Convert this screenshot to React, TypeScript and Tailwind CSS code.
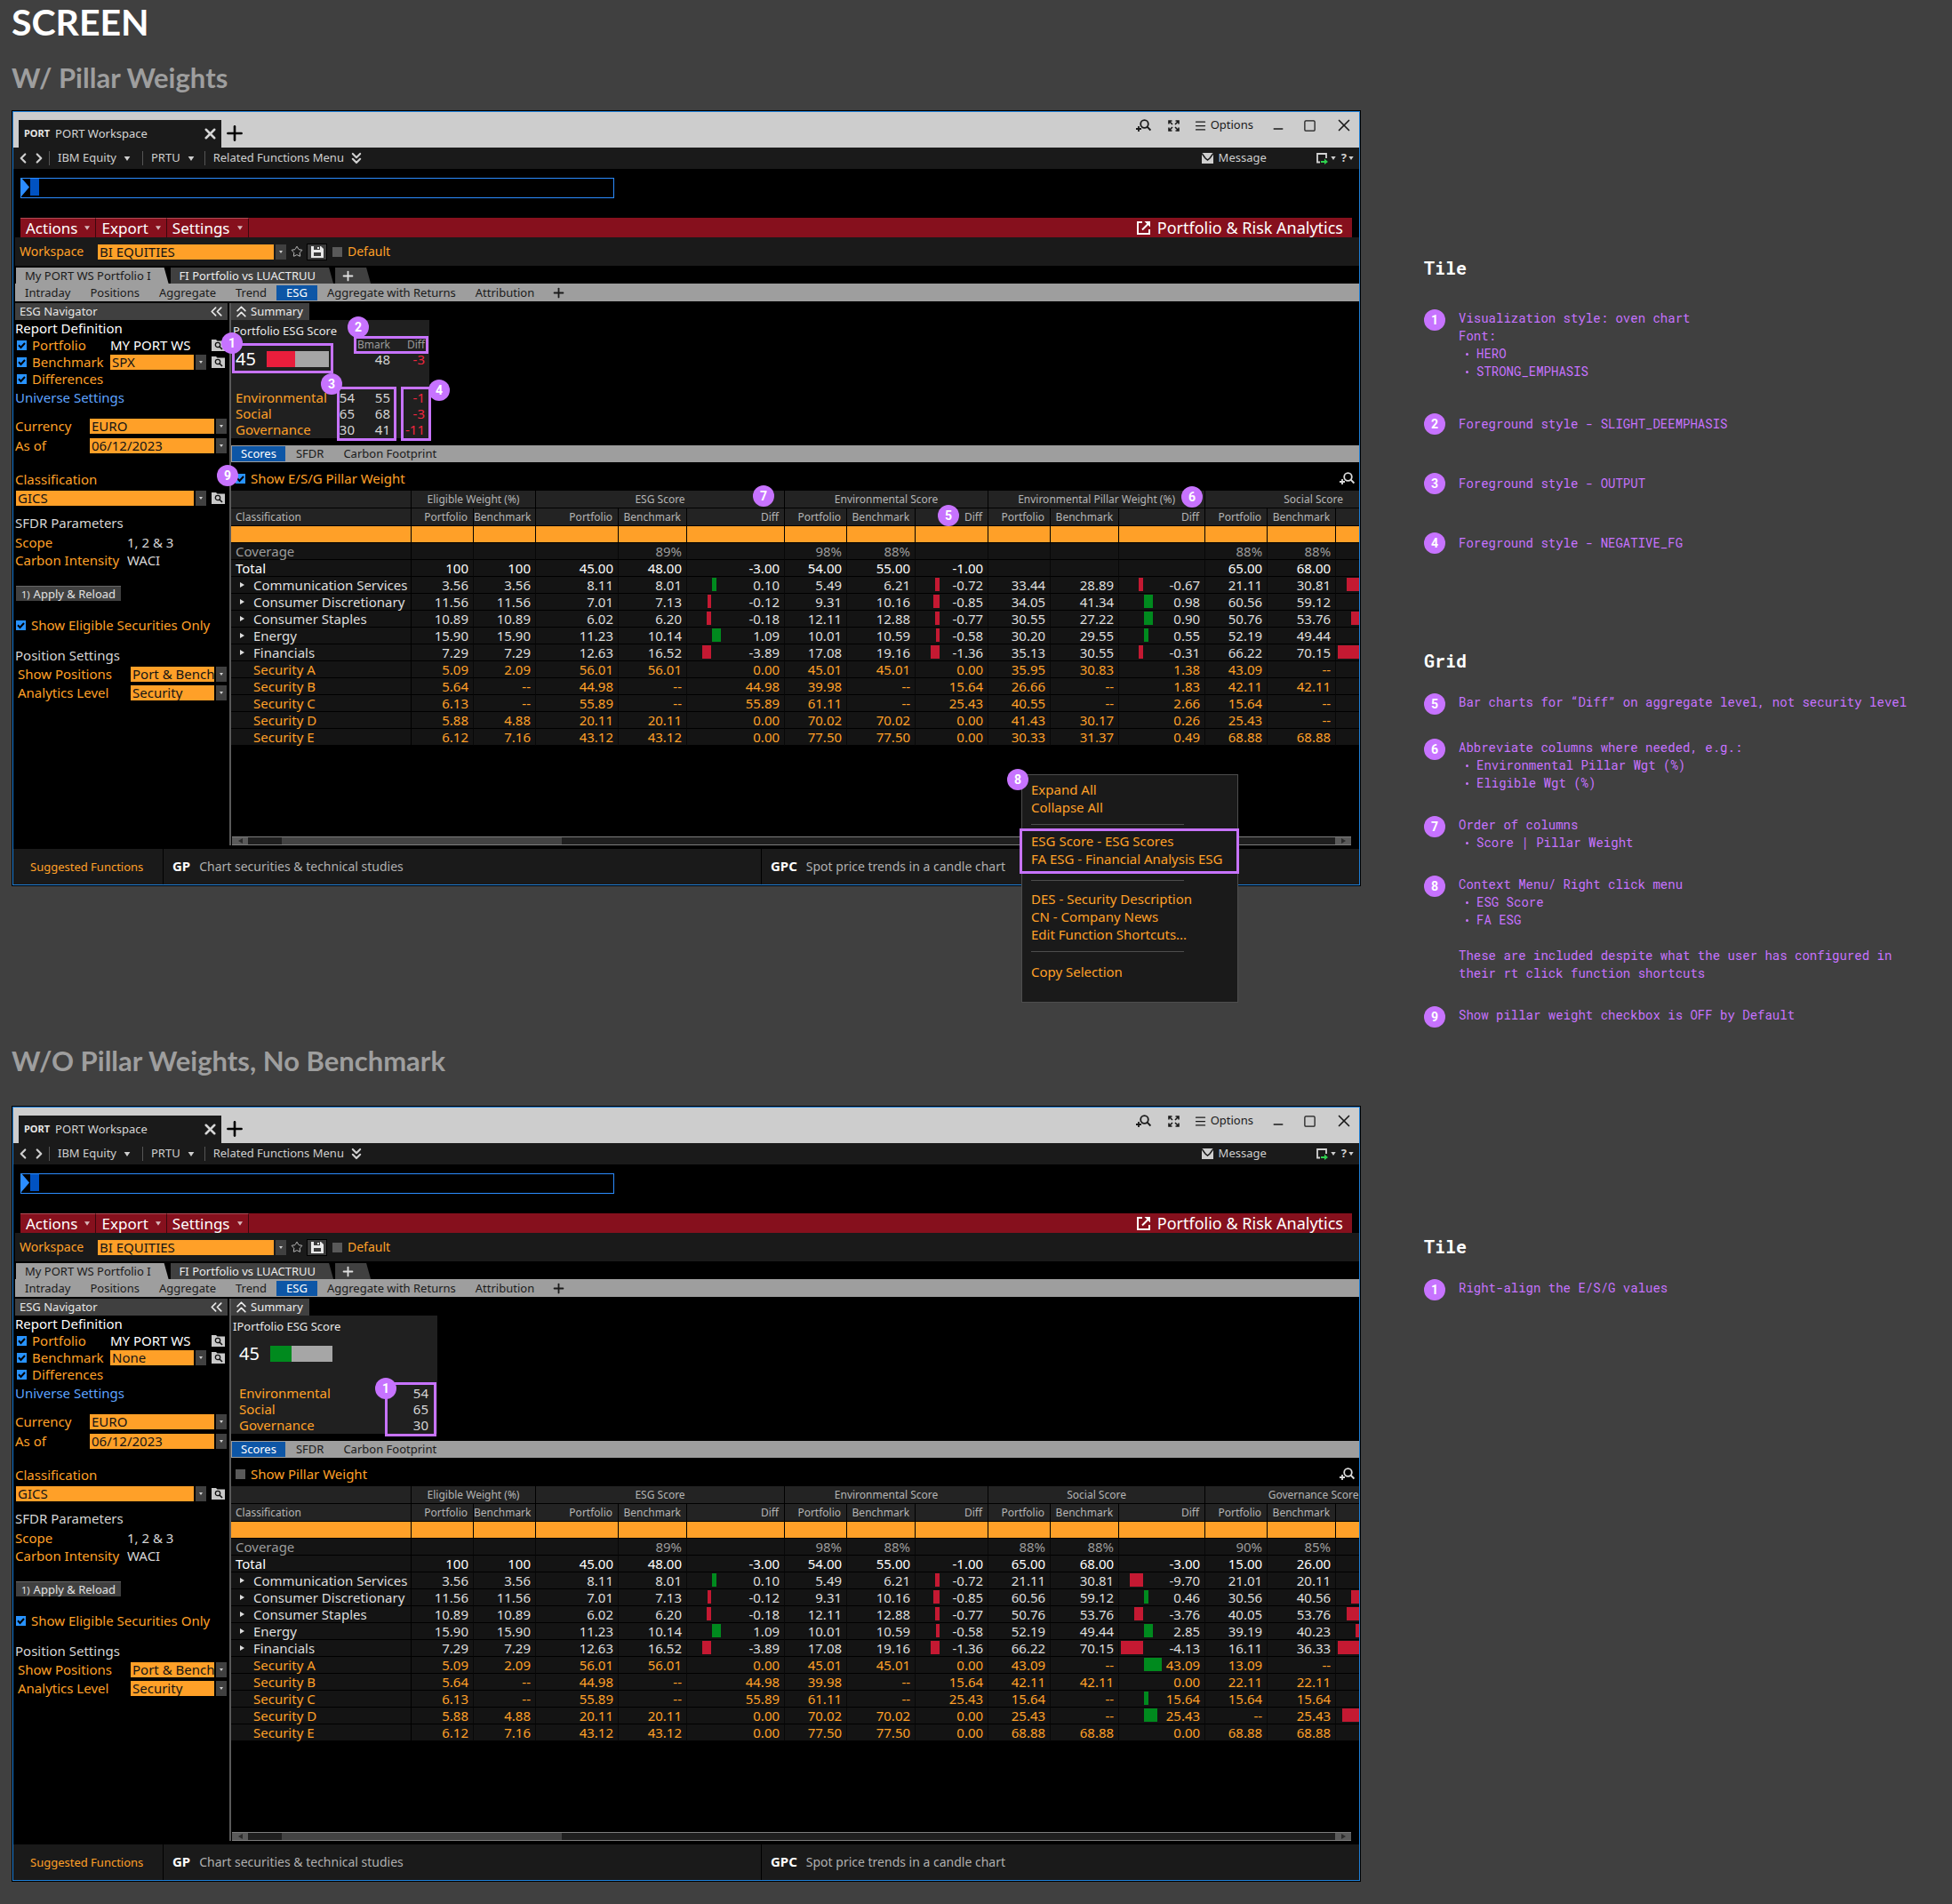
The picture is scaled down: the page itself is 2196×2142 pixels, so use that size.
import type { ReactNode } from 'react';
import { ChevronLeft, ChevronRight, ChevronsDown, ChevronsLeft, ChevronsUp, Menu, Minus, Plus, Square, Star, X } from 'lucide-react';
import clsx from 'clsx';

type Kind = 'coverage' | 'total' | 'group' | 'security';

type Row = {
  name: string;
  kind: Kind;
  cells: string[];
  bars: number[];
};

type Tail = {
  cells: string[];
  bars: number[];
};

// 列幅（分類 + 数値14列）
const COL_WIDTHS = [
  'w-[203px]', 'w-[70px]', 'w-[70px]', 'w-[93px]', 'w-[77px]', 'w-[110px]', 'w-[70px]', 'w-[77px]',
  'w-[82px]', 'w-[70px]', 'w-[77px]', 'w-[97px]', 'w-[70px]', 'w-[77px]', 'w-[97px]',
];

// 差分列のインデックス → bars の位置
const DIFF_COLS = [4, 7, 10, 13];

const BASE_ROWS: Row[] = [
  { name: 'Coverage', kind: 'coverage', cells: ['', '', '', '89%', '', '98%', '88%', ''], bars: [0, 0] },
  { name: 'Total', kind: 'total', cells: ['100', '100', '45.00', '48.00', '-3.00', '54.00', '55.00', '-1.00'], bars: [0, 0] },
  { name: 'Communication Services', kind: 'group', cells: ['3.56', '3.56', '8.11', '8.01', '0.10', '5.49', '6.21', '-0.72'], bars: [5, -5] },
  { name: 'Consumer Discretionary', kind: 'group', cells: ['11.56', '11.56', '7.01', '7.13', '-0.12', '9.31', '10.16', '-0.85'], bars: [-4, -7] },
  { name: 'Consumer Staples', kind: 'group', cells: ['10.89', '10.89', '6.02', '6.20', '-0.18', '12.11', '12.88', '-0.77'], bars: [-5, -5] },
  { name: 'Energy', kind: 'group', cells: ['15.90', '15.90', '11.23', '10.14', '1.09', '10.01', '10.59', '-0.58'], bars: [10, -4] },
  { name: 'Financials', kind: 'group', cells: ['7.29', '7.29', '12.63', '16.52', '-3.89', '17.08', '19.16', '-1.36'], bars: [-10, -10] },
  { name: 'Security A', kind: 'security', cells: ['5.09', '2.09', '56.01', '56.01', '0.00', '45.01', '45.01', '0.00'], bars: [0, 0] },
  { name: 'Security B', kind: 'security', cells: ['5.64', '--', '44.98', '--', '44.98', '39.98', '--', '15.64'], bars: [0, 0] },
  { name: 'Security C', kind: 'security', cells: ['6.13', '--', '55.89', '--', '55.89', '61.11', '--', '25.43'], bars: [0, 0] },
  { name: 'Security D', kind: 'security', cells: ['5.88', '4.88', '20.11', '20.11', '0.00', '70.02', '70.02', '0.00'], bars: [0, 0] },
  { name: 'Security E', kind: 'security', cells: ['6.12', '7.16', '43.12', '43.12', '0.00', '77.50', '77.50', '0.00'], bars: [0, 0] },
];

const PILLAR_TAIL: Tail[] = [
  { cells: ['', '', '', '88%', '88%', ''], bars: [0, 0] },
  { cells: ['', '', '', '65.00', '68.00', ''], bars: [0, 0] },
  { cells: ['33.44', '28.89', '-0.67', '21.11', '30.81', ''], bars: [-5, -15] },
  { cells: ['34.05', '41.34', '0.98', '60.56', '59.12', ''], bars: [10, 0] },
  { cells: ['30.55', '27.22', '0.90', '50.76', '53.76', ''], bars: [10, -10] },
  { cells: ['30.20', '29.55', '0.55', '52.19', '49.44', ''], bars: [5, 0] },
  { cells: ['35.13', '30.55', '-0.31', '66.22', '70.15', ''], bars: [-5, -25] },
  { cells: ['35.95', '30.83', '1.38', '43.09', '--', ''], bars: [0, 0] },
  { cells: ['26.66', '--', '1.83', '42.11', '42.11', ''], bars: [0, 0] },
  { cells: ['40.55', '--', '2.66', '15.64', '--', ''], bars: [0, 0] },
  { cells: ['41.43', '30.17', '0.26', '25.43', '--', ''], bars: [0, 0] },
  { cells: ['30.33', '31.37', '0.49', '68.88', '68.88', ''], bars: [0, 0] },
];

const SOCIAL_TAIL: Tail[] = [
  { cells: ['88%', '88%', '', '90%', '85%', ''], bars: [0, 0] },
  { cells: ['65.00', '68.00', '-3.00', '15.00', '26.00', ''], bars: [0, 0] },
  { cells: ['21.11', '30.81', '-9.70', '21.01', '20.11', ''], bars: [-15, 0] },
  { cells: ['60.56', '59.12', '0.46', '30.56', '40.56', ''], bars: [5, -10] },
  { cells: ['50.76', '53.76', '-3.76', '40.05', '53.76', ''], bars: [-10, -15] },
  { cells: ['52.19', '49.44', '2.85', '39.19', '40.23', ''], bars: [10, -5] },
  { cells: ['66.22', '70.15', '-4.13', '16.11', '36.33', ''], bars: [-25, -25] },
  { cells: ['43.09', '--', '43.09', '13.09', '--', ''], bars: [20, 0] },
  { cells: ['42.11', '42.11', '0.00', '22.11', '22.11', ''], bars: [0, 0] },
  { cells: ['15.64', '--', '15.64', '15.64', '15.64', ''], bars: [5, 0] },
  { cells: ['25.43', '--', '25.43', '--', '25.43', ''], bars: [15, -20] },
  { cells: ['68.88', '68.88', '0.00', '68.88', '68.88', ''], bars: [0, 0] },
];

const KIND_COLORS: Record<Kind, string> = {
  coverage: 'text-[#9b9b9b]',
  total: 'text-white',
  group: 'text-[#dedede]',
  security: 'text-[#ffa028]',
};

/* ---------- アイコン ---------- */

function CaretDown({ className }: { className?: string }) {
  return (
    <svg viewBox="0 0 8 6" className={clsx('shrink-0 fill-current', className)}>
      <path d="M0 0h8L4 6z" />
    </svg>
  );
}

function SearchPlusIcon({ className }: { className?: string }) {
  return (
    <svg viewBox="0 0 17 15" className={className} fill="none" stroke="currentColor">
      <circle cx="9.5" cy="5.5" r="4.3" strokeWidth="1.8" />
      <path d="M12.6 8.6l3.8 4" strokeWidth="2" />
      <path d="M0 11h6M3 8v6" strokeWidth="1.8" />
    </svg>
  );
}

function ExpandIcon() {
  return (
    <svg viewBox="0 0 13 13" className="h-[13px] w-[13px]">
      <path
        d="M1 4.500V1h3.500M1 1l4 4M8.500 1H12v3.500M12 1L8 5M1 8.500V12h3.500M1 12l4-4M12 8.500V12H8.500M12 12L8 8"
        fill="none"
        stroke="currentColor"
        strokeWidth="1.600"
      />
    </svg>
  );
}

function MailIcon() {
  return (
    <svg viewBox="0 0 13 12" className="h-3 w-[13px]">
      <path d="M0 0h13v12H0z" fill="#cfcfcf" />
      <path d="M0 0.500l4 5.500 2.500 2L9 6l4-5.500" fill="none" stroke="#1a1a1a" strokeWidth="1.600" />
    </svg>
  );
}

function PanelArrowIcon() {
  return (
    <svg viewBox="0 0 13 13" className="h-[13px] w-[13px]" fill="none">
      <path d="M4 10.500H1V1h10v5" stroke="#d4d4d4" strokeWidth="1.800" />
      <path d="M5 9h4V6.500l4 3.500-4 3v-2H5z" fill="#2fd04e" />
    </svg>
  );
}

function PopOutIcon() {
  return (
    <svg viewBox="0 0 15 15" className="h-[15px] w-[15px]" fill="none" stroke="#fff" strokeWidth="2">
      <path d="M6 1H1v13h13V9" />
      <path d="M6 9.500l7-7" />
      <path d="M8.500 0H15v6.500z" fill="#fff" stroke="none" />
    </svg>
  );
}

function SaveIcon() {
  return (
    <svg viewBox="0 0 14 13" className="h-[13px] w-[14px]">
      <path d="M0 0h11l3 3v10H0z" fill="#e8e8e8" />
      <path d="M3 0h7v4H3z" fill="#3c3c3c" />
      <path d="M7 1h2v2H7z" fill="#e8e8e8" />
      <path d="M3 7h8v4H3z" fill="#3c3c3c" />
    </svg>
  );
}

function LookupIcon() {
  return (
    <svg viewBox="0 0 15 13" className="h-[13px] w-[15px]">
      <path d="M0 0h5l1.500 1.500H15V13H0z" fill="#c9c9c9" />
      <circle cx="7" cy="6" r="2.700" fill="none" stroke="#111" strokeWidth="1.300" />
      <path d="M9 8l3 3" stroke="#111" strokeWidth="1.600" />
    </svg>
  );
}

/* ---------- 共通パーツ ---------- */

function Badge({ n, className }: { n: number; className?: string }) {
  return (
    <span
      className={clsx(
        "flex h-6 w-6 shrink-0 items-center justify-center rounded-full bg-[#c773ff] font-['Roboto',sans-serif] text-sm font-bold text-white",
        className
      )}
    >
      {n}
    </span>
  );
}

function Outline({ className }: { className: string }) {
  return <span className={clsx('pointer-events-none absolute border-3 border-[#c773ff]', className)} />;
}

function Check({ label, checked, className }: { label: string; checked?: boolean; className?: string }) {
  return (
    <label className={clsx('flex items-center gap-1.5 whitespace-nowrap text-[#ffa028]', className)}>
      <span className="grid shrink-0">
        <input
          type="checkbox"
          defaultChecked={checked}
          className="col-start-1 row-start-1 h-[11px] w-[11px] appearance-none bg-[#595959] checked:bg-[#2893ff]"
        />
        {checked && (
          <svg viewBox="0 0 11 11" className="pointer-events-none col-start-1 row-start-1 h-[11px] w-[11px]" fill="none" stroke="#000" strokeWidth="2">
            <path d="M2 5.300l2.500 2.700L9 3" />
          </svg>
        )}
      </span>
      {label}
    </label>
  );
}

function Dropdown({ id, label, value, className }: { id: string; label?: string; value: string; className?: string }) {
  return (
    <span className={clsx('flex h-[17px] gap-0.5', className)}>
      <select
        id={id}
        aria-label={label}
        className="h-full min-w-0 flex-1 appearance-none overflow-hidden bg-[#ffa028] pl-0.5 text-[15px] leading-[17px] text-[#141414]"
      >
        <option>{value}</option>
      </select>
      <span className="flex w-3 items-center justify-center bg-[#404040] text-[#d0d0d0]">
        <CaretDown className="h-[3px] w-1" />
      </span>
    </span>
  );
}

/* ---------- ウィンドウ上部 ---------- */

function TitleBar() {
  return (
    <div className="flex h-10 bg-[#cdcdcd] px-1.5 text-[13px] text-[#1a1a1a]">
      <div className="flex h-[31px] w-[228px] items-center self-end bg-[#1a1a1a] pl-1.5 pr-[3px] text-[#d6d6d6]">
        <span className="text-[11px] font-bold text-[#e6e6e6]">PORT</span>
        <span className="ml-1.5 flex-1">PORT Workspace</span>
        <button type="button" aria-label="Close tab">
          <X size={19} strokeWidth={3.2} />
        </button>
      </div>
      <button type="button" aria-label="New tab" className="ml-0.5 mt-2 self-center text-black">
        <Plus size={26} strokeWidth={2.4} />
      </button>
      <div className="ml-auto flex h-[30px] items-center">
        <button type="button" aria-label="Search">
          <SearchPlusIcon className="h-[15px] w-[17px]" />
        </button>
        <button type="button" aria-label="Expand" className="ml-[19px]">
          <ExpandIcon />
        </button>
        <button type="button" className="ml-4 flex items-center gap-1">
          <Menu size={15} strokeWidth={2} />
          Options
        </button>
        <button type="button" aria-label="Minimize" className="ml-5 pt-2">
          <Minus size={16} strokeWidth={2.5} />
        </button>
        <button type="button" aria-label="Maximize" className="ml-5">
          <Square size={15} strokeWidth={2} />
        </button>
        <button type="button" aria-label="Close" className="ml-5">
          <X size={22} strokeWidth={1.8} />
        </button>
      </div>
    </div>
  );
}

function NavBar() {
  return (
    <div className="flex h-6 items-center bg-[#1a1a1a] pl-0.5 pr-1.5 text-[13px] text-[#cfcfcf]">
      <button type="button" aria-label="Back">
        <ChevronLeft size={18} strokeWidth={3} />
      </button>
      <button type="button" aria-label="Forward">
        <ChevronRight size={18} strokeWidth={3} />
      </button>
      <span className="ml-0.5 h-4 w-px bg-[#555]" />
      <button type="button" className="flex items-center gap-2 px-[9px]">
        IBM Equity
        <CaretDown className="h-[5px] w-2" />
      </button>
      <span className="ml-1 h-4 w-px bg-[#555]" />
      <button type="button" className="flex items-center gap-2 px-[9px]">
        PRTU
        <CaretDown className="h-[5px] w-2" />
      </button>
      <span className="ml-0.5 h-4 w-px bg-[#555]" />
      <button type="button" className="flex items-center gap-1 px-[9px]">
        Related Functions Menu
        <ChevronsDown size={20} strokeWidth={2.6} />
      </button>
      <button type="button" className="ml-auto flex items-center gap-1.5">
        <MailIcon />
        Message
      </button>
      <button type="button" aria-label="Send to panel" className="ml-14 flex items-center gap-[3px]">
        <PanelArrowIcon />
        <CaretDown className="h-1 w-1.5" />
      </button>
      <button type="button" aria-label="Help" className="ml-1.5 flex items-center gap-0.5 font-bold">
        ?
        <CaretDown className="h-1 w-1.5" />
      </button>
    </div>
  );
}

function CommandLine() {
  return (
    <div className="px-2 pb-[23px] pt-[9px]">
      <div className="relative h-[23px] w-[668px]">
        <input type="text" aria-label="Command line" className="h-full w-full border border-[#2b8cff] bg-black pl-6 text-[15px] text-white" />
        <svg viewBox="0 0 9 21" className="absolute left-px top-px h-[21px] w-[9px] fill-[#2b8cff]">
          <path d="M0 0l9 10.500L0 21z" />
        </svg>
        <span className="absolute left-[11px] top-0.5 h-[19px] w-[10px] bg-[#0052c2]" />
      </div>
    </div>
  );
}

function ActionBar() {
  return (
    <div className="mx-2 flex h-[22px] items-center bg-[#86101d] text-[17px] leading-none text-white">
      {['Actions', 'Export', 'Settings'].map((item) => (
        <button key={item} type="button" className="flex h-full items-center gap-2 border-r border-t border-r-[#3d070d] border-t-[#b04a54] px-1.5">
          {item}
          <CaretDown className="h-[5px] w-1.5 text-[#d9b9bc]" />
        </button>
      ))}
      <a href="#analytics" className="ml-auto flex items-center gap-2 pr-2.5 text-lg leading-none">
        <PopOutIcon />
        Portfolio &amp; Risk Analytics
      </a>
    </div>
  );
}

function WorkspaceBar({ id }: { id: string }) {
  return (
    <div className="ml-0.5 flex h-8 items-center bg-[#1a1a1a] pl-[5px] text-sm text-[#ffa028]">
      <label htmlFor={`${id}-workspace`} className="w-[88px]">
        Workspace
      </label>
      <Dropdown id={`${id}-workspace`} value="BI EQUITIES" className="w-[212px]" />
      <button type="button" aria-label="Favorite" className="ml-[5px] text-[#cfcfcf]">
        <Star size={14} strokeWidth={1.5} />
      </button>
      <button type="button" aria-label="Save" className="ml-1 flex h-[19px] w-[23px] items-center justify-center border border-black bg-[#3c3c3c]">
        <SaveIcon />
      </button>
      <Check label="Default" className="ml-1.5" />
    </div>
  );
}

function WorkspaceTabs() {
  return (
    <div className="ml-0.5 pt-0.5 text-[13px]">
      <div className="flex h-[18px] gap-0.5 pl-px">
        <button type="button" className="bg-[#9e9e9e] pl-2.5 pr-5 leading-[18px] text-[#1a1a1a] [clip-path:polygon(0_0,calc(100%-5px)_0,100%_100%,0_100%)]">
          My PORT WS Portfolio I
        </button>
        <button type="button" className="bg-[#404040] pl-2.5 pr-5 leading-[18px] text-[#ececec] [clip-path:polygon(0_0,calc(100%-5px)_0,100%_100%,0_100%)]">
          FI Portfolio vs LUACTRUU
        </button>
        <button type="button" aria-label="Add workspace tab" className="w-10 bg-[#404040] pl-1.5 text-[#e0e0e0] [clip-path:polygon(0_0,calc(100%-5px)_0,100%_100%,0_100%)]">
          <Plus size={17} strokeWidth={2.5} />
        </button>
      </div>
      <div className="flex h-5 items-center bg-[#9e9e9e] text-[#1a1a1a]">
        {['Intraday', 'Positions', 'Aggregate', 'Trend', 'ESG', 'Aggregate with Returns', 'Attribution'].map((tab) => (
          <button key={tab} type="button" className={clsx('h-[17px] px-[11px] leading-[17px]', tab === 'ESG' && 'bg-[#0d56a6] text-white')}>
            {tab}
          </button>
        ))}
        <button type="button" aria-label="Add view" className="ml-2">
          <Plus size={17} strokeWidth={2.5} />
        </button>
      </div>
    </div>
  );
}

/* ---------- 左ナビ ---------- */

function Navigator({ id, benchmark }: { id: string; benchmark: string }) {
  return (
    <aside className="w-[239px] shrink-0 text-[15px] leading-[19px] text-[#ffa028]">
      <div className="flex h-[19px] items-center justify-between bg-[#404040] pl-[5px] pr-0.5 text-[13px] text-[#e6e6e6]">
        ESG Navigator
        <button type="button" aria-label="Collapse navigator">
          <ChevronsLeft size={21} strokeWidth={2} />
        </button>
      </div>
      <h3 className="text-white">Report Definition</h3>
      <div className="flex h-[19px] items-center pl-0.5 pr-[3px]">
        <Check label="Portfolio" checked className="w-[105px]" />
        <span className="flex-1 text-white">MY PORT WS</span>
        <button type="button" aria-label="Look up portfolio">
          <LookupIcon />
        </button>
      </div>
      <div className="flex h-[19px] items-center pl-0.5 pr-[3px]">
        <Check label="Benchmark" checked className="w-[105px]" />
        <Dropdown id={`${id}-benchmark`} label="Benchmark" value={benchmark} className="w-[108px]" />
        <button type="button" aria-label="Look up benchmark" className="ml-auto">
          <LookupIcon />
        </button>
      </div>
      <Check label="Differences" checked className="h-[19px] pl-0.5" />
      <a href="#universe" className="block h-[22px] leading-[22px] text-[#5ea3ff]">
        Universe Settings
      </a>

      <div className="mt-2.5 flex h-[22px] items-center">
        <label htmlFor={`${id}-currency`} className="w-[84px]">Currency</label>
        <Dropdown id={`${id}-currency`} value="EURO" className="w-[154px]" />
      </div>
      <div className="flex h-[22px] items-center">
        <label htmlFor={`${id}-asof`} className="w-[84px]">As of</label>
        <Dropdown id={`${id}-asof`} value="06/12/2023" className="w-[154px]" />
      </div>

      <label htmlFor={`${id}-class`} className="mt-[18px] block">Classification</label>
      <div className="flex h-[22px] items-center justify-between pl-px pr-[3px]">
        <Dropdown id={`${id}-class`} value="GICS" className="w-[214px]" />
        <button type="button" aria-label="Look up classification">
          <LookupIcon />
        </button>
      </div>

      <h3 className="mt-2 text-[#d6d6d6]">SFDR Parameters</h3>
      <dl className="mt-0.5 grid grid-cols-[126px_1fr] leading-5">
        <dt>Scope</dt>
        <dd className="text-[#d6d6d6]">1, 2 &amp; 3</dd>
        <dt>Carbon Intensity</dt>
        <dd className="text-[#d6d6d6]">WACI</dd>
      </dl>

      <button type="button" className="ml-px mt-[19px] flex h-[17px] items-center gap-1 border-t border-[#666] bg-[#404040] px-1.5 text-[13px] text-[#e0e0e0]">
        <span className="text-[11px]">1)</span>
        Apply &amp; Reload
      </button>

      <Check label="Show Eligible Securities Only" checked className="mt-[18px] h-[19px] pl-px" />

      <h3 className="mt-[15px] text-[#d6d6d6]">Position Settings</h3>
      <div className="mt-px flex h-[21px] items-center pl-[3px]">
        <label htmlFor={`${id}-positions`} className="w-[127px]">Show Positions</label>
        <Dropdown id={`${id}-positions`} value="Port &amp; Bench" className="w-[108px]" />
      </div>
      <div className="flex h-[21px] items-center pl-[3px]">
        <label htmlFor={`${id}-level`} className="w-[127px]">Analytics Level</label>
        <Dropdown id={`${id}-level`} value="Security" className="w-[108px]" />
      </div>
    </aside>
  );
}

/* ---------- タイル ---------- */

function Gauge({ fill, className }: { fill: string; className?: string }) {
  return (
    <span className={clsx('flex items-center gap-3 text-xl text-white', className)}>
      45
      <span className="flex h-[18px] w-[70px] bg-[#a6a6a6]">
        <span className={fill} />
      </span>
    </span>
  );
}

function PillarTile() {
  const scores = [
    ['Environmental', '54', '55', '-1'],
    ['Social', '65', '68', '-3'],
    ['Governance', '30', '41', '-11'],
  ];
  return (
    <div className="relative h-[133px] w-[223px] bg-[#202020] pt-1 text-[15px]">
      <h4 className="h-4 pl-0.5 text-[13px] leading-4 text-[#e8e8e8]">Portfolio ESG Score</h4>
      <div className="grid grid-cols-[1fr_26px_40px_39px] px-[5px] text-right leading-[18px] text-[#d6d6d6]">
        <span className="col-span-3 text-xs leading-[15px] text-[#9b9b9b]">Bmark</span>
        <span className="text-xs leading-[15px] text-[#9b9b9b]">Diff</span>
        <Gauge fill="w-8 bg-[#e91e3c]" className="col-span-2 h-[18px]" />
        <span>48</span>
        <span className="text-[#f0263f]">-3</span>
        <span className="col-span-4 h-[25px]" />
        {scores.map(([name, port, bmark, diff]) => (
          <div key={name} className="contents">
            <span className="text-left text-[#ffa028]">{name}</span>
            <span>{port}</span>
            <span>{bmark}</span>
            <span className="text-[#f0263f]">{diff}</span>
          </div>
        ))}
      </div>
      <Outline className="left-px top-[26px] h-[34px] w-[114px]" />
      <Outline className="left-[138px] top-[18px] h-5 w-[84px]" />
      <Outline className="left-[119px] top-[75px] h-[61px] w-[67px]" />
      <Outline className="left-[191px] top-[75px] h-[61px] w-[34px]" />
      <Badge n={1} className="absolute -left-[11px] top-3.5" />
      <Badge n={2} className="absolute -top-1 left-[131px]" />
      <Badge n={3} className="absolute left-[101px] top-[60px]" />
      <Badge n={4} className="absolute left-[222px] top-[67px]" />
    </div>
  );
}

function SimpleTile() {
  const scores = [
    ['Environmental', '54'],
    ['Social', '65'],
    ['Governance', '30'],
  ];
  return (
    <div className="relative h-[133px] w-[232px] bg-[#202020] pt-1 text-[15px]">
      <h4 className="h-4 pl-0.5 text-[13px] leading-4 text-[#e8e8e8]">IPortfolio ESG Score</h4>
      <div className="grid grid-cols-[1fr_40px] pl-[9px] pr-2.5 pt-3.5 text-right leading-[18px] text-[#d6d6d6]">
        <Gauge fill="w-6 bg-[#008a1e]" className="col-span-2 mb-[26px] h-[18px]" />
        {scores.map(([name, value]) => (
          <div key={name} className="contents">
            <span className="text-left text-[#ffa028]">{name}</span>
            <span>{value}</span>
          </div>
        ))}
      </div>
      <Outline className="left-[173px] top-[75px] h-[61px] w-[58px]" />
      <Badge n={1} className="absolute left-[162px] top-[70px]" />
    </div>
  );
}

/* ---------- グリッド ---------- */

function DiffBar({ size }: { size: number }) {
  if (!size) return null;
  return (
    <span
      className={clsx('absolute top-px h-[15px]', size > 0 ? 'left-7 bg-[#008a1e]' : 'right-[calc(100%-27px)] bg-[#c41932]')}
      style={{ width: Math.abs(size) }}
    />
  );
}

function ScoreGrid({ groups, tail }: { groups: string[]; tail: Tail[] }) {
  const spans = [2, 3, 3, 3, 3];
  const subHeads = ['Portfolio', 'Benchmark', 'Portfolio', 'Benchmark', 'Diff', 'Portfolio', 'Benchmark', 'Diff', 'Portfolio', 'Benchmark', 'Diff', 'Portfolio', 'Benchmark', ''];
  return (
    <div className="overflow-hidden">
      <table className="w-[1340px] table-fixed border-separate border-spacing-0 text-[15px] leading-[18px]">
        <colgroup>
          {COL_WIDTHS.map((w, i) => (
            <col key={i} className={w} />
          ))}
        </colgroup>
        <thead className="text-xs text-[#b5b5b5]">
          <tr>
            <th className="h-5 border-b border-r border-black bg-[#232323] p-0" />
            {groups.map((g, i) => (
              <th key={g} colSpan={spans[i]} className="h-5 border-b border-r border-black bg-[#232323] p-0 text-center font-normal">
                {g}
              </th>
            ))}
          </tr>
          <tr>
            <th className="h-5 border-b border-r border-black bg-[#232323] p-0 pl-[5px] text-left font-normal">Classification</th>
            {subHeads.map((h, i) => (
              <th key={i} className="h-5 border-b border-r border-black bg-[#232323] p-0 pr-1.5 text-right font-normal">
                {h}
              </th>
            ))}
          </tr>
          <tr>
            {COL_WIDTHS.map((_, i) => (
              <th key={i} className="h-[19px] border-b border-r border-black bg-[#ffa028] p-0">
                <input type="text" aria-label="Filter" className="block h-[18px] w-full px-1 text-[#141414]" />
              </th>
            ))}
          </tr>
        </thead>
        <tbody>
          {BASE_ROWS.map((row, r) => {
            const cells = [...row.cells, ...tail[r].cells];
            const bars = [...row.bars, ...tail[r].bars];
            return (
              <tr key={row.name} className={KIND_COLORS[row.kind]}>
                <td className="h-[19px] border-b border-r border-black bg-[#141414] p-0">
                  <span
                    className={clsx(
                      'flex h-[18px] items-center whitespace-nowrap',
                      row.kind === 'security' && 'pl-[25px]',
                      row.kind === 'group' && 'gap-2.5 pl-2.5',
                      (row.kind === 'coverage' || row.kind === 'total') && 'pl-[5px]'
                    )}
                  >
                    {row.kind === 'group' && (
                      <svg viewBox="0 0 5 6" className="h-1.5 w-[5px] fill-current">
                        <path d="M0 0l5 3-5 3z" />
                      </svg>
                    )}
                    {row.name}
                  </span>
                </td>
                {cells.map((cell, i) => (
                  <td key={i} className="relative h-[19px] border-b border-r border-b-black border-r-[#080808] bg-[#141414] p-0 pr-[5px] text-right">
                    {DIFF_COLS.includes(i) && <DiffBar size={bars[DIFF_COLS.indexOf(i)]} />}
                    {cell}
                  </td>
                ))}
              </tr>
            );
          })}
        </tbody>
      </table>
    </div>
  );
}

function ScrollBar() {
  return (
    <div className="ml-px mr-[9px] mt-auto flex h-2.5 border-y border-[#7d7d7d] bg-[#1f1f1f]">
      <span className="flex w-[18px] items-center justify-center bg-[#5a5a5a]">
        <svg viewBox="0 0 5 6" className="h-1.5 w-[5px] fill-[#2b2b2b]">
          <path d="M5 0L0 3l5 3z" />
        </svg>
      </span>
      <span className="ml-[38px] w-1/4 bg-[#434343]" />
      <span className="ml-auto flex w-[18px] items-center justify-center bg-[#5a5a5a]">
        <svg viewBox="0 0 5 6" className="h-1.5 w-[5px] fill-[#2b2b2b]">
          <path d="M0 0l5 3-5 3z" />
        </svg>
      </span>
    </div>
  );
}

function Footer() {
  return (
    <div className="mt-1 grid h-10 grid-cols-[168px_672px_1fr] gap-px text-sm text-[#b0b0b0]">
      <a href="#suggested" className="flex items-center bg-[#1a1a1a] pl-[19px] text-[13px] text-[#ffa028]">
        Suggested Functions
      </a>
      <a href="#gp" className="flex items-center gap-2.5 bg-[#1a1a1a] pl-2.5">
        <b className="text-[15px] text-white">GP</b>
        Chart securities &amp; technical studies
      </a>
      <a href="#gpc" className="flex items-center gap-2.5 bg-[#1a1a1a] pl-2.5">
        <b className="text-[15px] text-white">GPC</b>
        Spot price trends in a candle chart
      </a>
    </div>
  );
}

type TerminalProps = {
  id: string;
  benchmark: string;
  tile: ReactNode;
  pillarLabel: string;
  pillarOn?: boolean;
  groups: string[];
  tail: Tail[];
  children?: ReactNode;
};

function Terminal({ id, benchmark, tile, pillarLabel, pillarOn, groups, tail, children }: TerminalProps) {
  return (
    <div className="relative min-w-0 flex-1 self-start border border-black">
      <div className="border border-[#1f7fd6] bg-black">
        <TitleBar />
        <NavBar />
        <CommandLine />
        <ActionBar />
        <WorkspaceBar id={id} />
        <WorkspaceTabs />
        <div className="ml-0.5 mt-0.5 flex gap-0.5">
          <Navigator id={id} benchmark={benchmark} />
          <div className="flex min-h-[610px] min-w-0 flex-1 flex-col border-l-2 border-[#595959]">
            <button type="button" className="flex h-[19px] w-[88px] items-center bg-[#404040] pl-px text-[13px] text-[#ececec]">
              <ChevronsUp size={21} strokeWidth={2} />
              Summary
            </button>
            {tile}
            <div className="mt-2 flex h-[19px] items-center bg-[#9e9e9e] pl-px text-[13px] text-[#1a1a1a]">
              <button type="button" className="h-[17px] bg-[#0d56a6] px-2.5 leading-[17px] text-white">Scores</button>
              <button type="button" className="pl-3 pr-2.5">SFDR</button>
              <button type="button" className="px-3">Carbon Footprint</button>
            </div>
            <div className="relative flex h-8 items-center justify-between px-[5px] pt-1 text-[15px]">
              <Check label={pillarLabel} checked={pillarOn} />
              <button type="button" aria-label="Search grid" className="text-[#dcdcdc]">
                <SearchPlusIcon className="h-[15px] w-[17px]" />
              </button>
              {pillarOn && <Badge n={9} className="absolute -left-4 top-[3px]" />}
            </div>
            <div className="relative">
              <ScoreGrid groups={groups} tail={tail} />
              {pillarOn && (
                <>
                  <Badge n={7} className="absolute -top-1.5 left-[587px]" />
                  <Badge n={5} className="absolute left-[795px] top-4" />
                  <Badge n={6} className="absolute -top-[5px] left-[1069px]" />
                </>
              )}
            </div>
            <ScrollBar />
          </div>
        </div>
        <Footer />
      </div>
      {children}
    </div>
  );
}

function ContextMenu() {
  return (
    <div className="absolute left-[1135px] top-[746px] z-10 w-[244px] border border-[#4d4d4d] bg-[#1a1a1a] pb-6 pl-2.5 pt-1.5 text-[15px] leading-5 text-[#ffa028]">
      <button type="button" className="block">Expand All</button>
      <button type="button" className="block">Collapse All</button>
      <hr className="mb-2 mt-[9px] w-[172px] border-[#4d4d4d]" />
      <div className="relative">
        <button type="button" className="block">ESG Score - ESG Scores</button>
        <button type="button" className="block">FA ESG - Financial Analysis ESG</button>
        <Outline className="-left-[13px] -top-1 h-[51px] w-[247px]" />
      </div>
      <hr className="mb-2.5 mt-3.5 w-[172px] border-[#4d4d4d]" />
      <button type="button" className="block">DES - Security Description</button>
      <button type="button" className="block">CN - Company News</button>
      <button type="button" className="block">Edit Function Shortcuts...</button>
      <hr className="mb-3 mt-[9px] w-[172px] border-[#4d4d4d]" />
      <button type="button" className="block">Copy Selection</button>
      <Badge n={8} className="absolute -left-[17px] -top-[7px]" />
    </div>
  );
}

/* ---------- 注釈 ---------- */

function Note({ n, text, bullets, footer, className }: { n: number; text: string; bullets?: string[]; footer?: string; className?: string }) {
  return (
    <div className={clsx('flex gap-[15px]', className)}>
      <Badge n={n} />
      <div>
        <p className="whitespace-pre-line">{text}</p>
        {bullets && (
          <ul>
            {bullets.map((b) => (
              <li key={b} className="flex items-center gap-[9px] pl-2">
                <span className="h-[3px] w-[3px] rounded-full bg-current" />
                {b}
              </li>
            ))}
          </ul>
        )}
        {footer && <p className="mt-5 max-w-[500px]">{footer}</p>}
      </div>
    </div>
  );
}

function Notes({ children, className }: { children: ReactNode; className: string }) {
  return (
    <aside className={clsx("w-[594px] shrink-0 font-['Roboto_Mono','DejaVu_Sans_Mono',monospace] text-sm leading-5 text-[#c773ff]", className)}>
      {children}
    </aside>
  );
}

const NOTE_HEADING = 'text-xl leading-[26px] font-bold text-white';
const SECTION_HEADING = "font-['Lato',sans-serif] text-[31px] leading-[38px] font-bold text-[#9e9e9e]";

export default function App() {
  return (
    <div className="min-h-screen bg-[#404040] pb-[25px] pl-[13px] font-['Noto_Sans',sans-serif]">
      <h1 className="font-['Lato',sans-serif] text-[41px] leading-[50px] font-bold text-white">SCREEN</h1>

      <h2 className={clsx('mt-[18px]', SECTION_HEADING)}>W/ Pillar Weights</h2>
      <section className="mt-[18px] flex gap-[71px]">
        <Terminal
          id="weights"
          benchmark="SPX"
          tile={<PillarTile />}
          pillarLabel="Show E/S/G Pillar Weight"
          pillarOn
          groups={['Eligible Weight (%)', 'ESG Score', 'Environmental Score', 'Environmental Pillar Weight (%)', 'Social Score']}
          tail={PILLAR_TAIL}
        >
          <ContextMenu />
        </Terminal>
        <Notes className="pt-[164px]">
          <h3 className={NOTE_HEADING}>Tile</h3>
          <Note className="mt-[34px]" n={1} text={'Visualization style: oven chart\nFont:'} bullets={['HERO', 'STRONG_EMPHASIS']} />
          <Note className="mt-[37px] items-center" n={2} text="Foreground style - SLIGHT_DEEMPHASIS" />
          <Note className="mt-[43px] items-center" n={3} text="Foreground style - OUTPUT" />
          <Note className="mt-[43px] items-center" n={4} text="Foreground style - NEGATIVE_FG" />

          <h3 className={clsx('mt-[107px]', NOTE_HEADING)}>Grid</h3>
          <Note className="mt-6" n={5} text="Bar charts for “Diff” on aggregate level, not security level" />
          <Note className="mt-[27px]" n={6} text="Abbreviate columns where needed, e.g.:" bullets={['Environmental Pillar Wgt (%)', 'Eligible Wgt (%)']} />
          <Note className="mt-[27px]" n={7} text="Order of columns" bullets={['Score | Pillar Weight']} />
          <Note
            className="mt-[27px]"
            n={8}
            text="Context Menu/ Right click menu"
            bullets={['ESG Score', 'FA ESG']}
            footer="These are included despite what the user has configured in their rt click function shortcuts"
          />
          <Note className="mt-[27px]" n={9} text="Show pillar weight checkbox is OFF by Default" />
        </Notes>
      </section>

      <h2 className={clsx('mt-[18px]', SECTION_HEADING)}>W/O Pillar Weights, No Benchmark</h2>
      <section className="mt-8 flex gap-[71px]">
        <Terminal
          id="plain"
          benchmark="None"
          tile={<SimpleTile />}
          pillarLabel="Show Pillar Weight"
          groups={['Eligible Weight (%)', 'ESG Score', 'Environmental Score', 'Social Score', 'Governance Score']}
          tail={SOCIAL_TAIL}
        />
        <Notes className="pt-[145px]">
          <h3 className={NOTE_HEADING}>Tile</h3>
          <Note className="mt-6" n={1} text="Right-align the E/S/G values" />
        </Notes>
      </section>
    </div>
  );
}
